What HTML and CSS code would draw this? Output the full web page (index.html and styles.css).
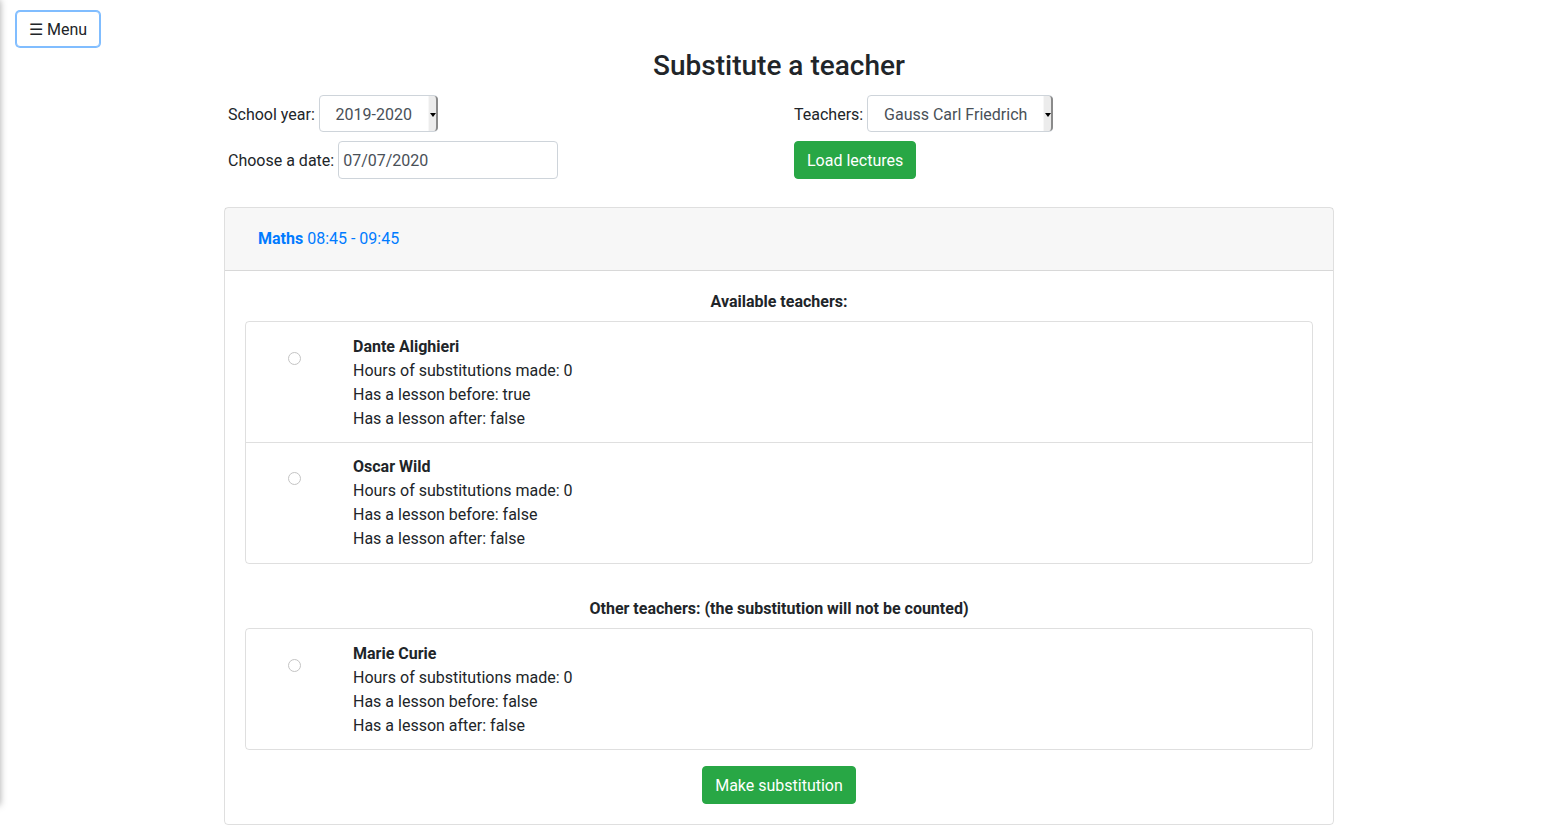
FILE: index.html
```html
<!DOCTYPE html>
<html lang="en">
<head>
<meta charset="utf-8">
<title>Substitute a teacher</title>
<link rel="stylesheet" href="styles.css">
</head>
<body>
<div class="sidebar-shadow"></div>
<button class="menu-btn">☰ Menu</button>
<main class="container">
  <h3 class="title">Substitute a teacher</h3>
  <div class="form-row">
    <div class="col">
      <div class="field">
        <label class="lbl">School year:</label>
        <div class="select sel-year"><span class="sel-text">2019-2020</span><span class="sel-arrow"></span></div>
      </div>
      <div class="field">
        <label class="lbl">Choose a date:</label>
        <div class="date-input">07/07/2020</div>
      </div>
    </div>
    <div class="col">
      <div class="field">
        <label class="lbl lbl-right">Teachers:</label>
        <div class="select sel-teacher"><span class="sel-text">Gauss Carl Friedrich</span><span class="sel-arrow"></span></div>
      </div>
      <div class="field">
        <button class="btn-green">Load lectures</button>
      </div>
    </div>
  </div>

  <section class="card">
    <div class="card-header">
      <button class="btn-link"><b>Maths</b> 08:45 - 09:45</button>
    </div>
    <div class="card-body">
      <div class="list-title">Available teachers:</div>
      <ul class="list">
        <li class="item">
          <div class="radio-col"><span class="radio"></span></div>
          <div class="info">
            <div class="name">Dante Alighieri</div>
            <div>Hours of substitutions made: 0</div>
            <div>Has a lesson before: true</div>
            <div>Has a lesson after: false</div>
          </div>
        </li>
        <li class="item">
          <div class="radio-col"><span class="radio"></span></div>
          <div class="info">
            <div class="name">Oscar Wild</div>
            <div>Hours of substitutions made: 0</div>
            <div>Has a lesson before: false</div>
            <div>Has a lesson after: false</div>
          </div>
        </li>
      </ul>
      <div class="list-title other">Other teachers: (the substitution will not be counted)</div>
      <ul class="list">
        <li class="item">
          <div class="radio-col"><span class="radio"></span></div>
          <div class="info">
            <div class="name">Marie Curie</div>
            <div>Hours of substitutions made: 0</div>
            <div>Has a lesson before: false</div>
            <div>Has a lesson after: false</div>
          </div>
        </li>
      </ul>
      <div class="actions">
        <button class="btn-green">Make substitution</button>
      </div>
    </div>
  </section>
</main>
</body>
</html>
```
FILE: styles.css
```css
* { box-sizing: border-box; }
html, body { margin: 0; padding: 0; }
body {
  font-family: Roboto, "Liberation Sans", sans-serif;
  font-size: 16px;
  line-height: 24px;
  color: #212529;
  background: #fff;
  overflow: hidden;
}
.sidebar-shadow {
  position: fixed;
  left: -300px;
  top: 0;
  width: 300px;
  height: 805px;
  box-shadow: 0 0 7px rgba(0,0,0,0.35);
}
.menu-btn {
  position: absolute;
  left: 16px;
  top: 11px;
  height: 36px;
  width: 84px;
  padding: 0 11px;
  font-family: inherit;
  font-size: 16px;
  color: #212529;
  background: #fff;
  border: 1px solid #80bdff;
  border-radius: 4px;
  box-shadow: 0 0 0 1px #80bdff;
}
.container {
  width: 1110px;
  margin: 0 auto;
  padding-top: 49px;
}
.title {
  margin: 0 0 12px;
  font-size: 28px;
  line-height: 34px;
  font-weight: 500;
  text-align: center;
}
.form-row {
  display: flex;
}
.col {
  flex: none;
  width: 570px;
  display: flex;
  flex-direction: column;
  gap: 9px;
}
.field {
  display: flex;
  align-items: center;
  gap: 4px;
}
.lbl { margin-left: 4px; position: relative; top: 1px; }
.lbl-right { margin-left: 0; }
.select {
  position: relative;
  height: 37px;
  border: 1px solid #ced4da;
  border-radius: 4px;
  display: flex;
  align-items: center;
  color: #495057;
  background: #fff;
}
.sel-year { width: 119px; }
.sel-teacher { width: 186px; }
.sel-text {
  flex: 1;
  text-align: center;
  position: relative;
  top: 1px;
}
.sel-arrow {
  align-self: stretch;
  width: 10px;
  margin: 0 -1px 0 0;
  background: #ececec;
  border-left: 1px solid #f7f7f7;
  border-right: 2px solid #8a8a8a;
  border-radius: 0 4px 4px 0;
  position: relative;
}
.sel-arrow::after {
  content: "";
  position: absolute;
  left: 1px;
  top: 17px;
  border-left: 3px solid transparent;
  border-right: 3px solid transparent;
  border-top: 4px solid #000;
}
.date-input {
  width: 220px;
  height: 38px;
  border: 1px solid #ced4da;
  border-radius: 4px;
  padding: 7px 4px 5px;
  color: #495057;
}
.btn-green {
  height: 38px;
  padding: 0 12px;
  font-family: inherit;
  font-size: 16px;
  color: #fff;
  background: #28a745;
  border: 1px solid #28a745;
  border-radius: 4px;
}
.card {
  margin-top: 28px;
  border: 1px solid rgba(0,0,0,0.125);
  border-radius: 4px;
}
.card-header {
  padding: 11px 20px 13px;
  background: rgba(0,0,0,0.03);
  border-bottom: 1px solid rgba(0,0,0,0.125);
}
.btn-link {
  height: 38px;
  padding: 0 12px;
  font-family: inherit;
  font-size: 16px;
  color: #007bff;
  background: transparent;
  border: 1px solid transparent;
}
.btn-link b { font-weight: 700; }
.card-body {
  padding: 20px;
}
.list-title {
  font-weight: 700;
  text-align: center;
  line-height: 20px;
  padding-top: 1px;
  margin-bottom: 9px;
}
.list-title.other { margin-top: 34px; }
.list {
  list-style: none;
  margin: 0;
  padding: 0;
  border: 1px solid rgba(0,0,0,0.125);
  border-radius: 4px;
}
.item {
  display: flex;
  padding: 12px 20px;
}
.item:first-child { padding: 13px 20px 11px; }
.item + .item { border-top: 1px solid rgba(0,0,0,0.125); }
.radio-col {
  width: 87px;
  flex: none;
}
.radio {
  display: block;
  width: 13px;
  height: 13px;
  margin: 17px 0 0 22px;
  border: 1px solid #c4c4c4;
  border-radius: 50%;
  background: #fff;
}
.name { font-weight: 700; }
.actions {
  display: flex;
  justify-content: center;
  margin-top: 16px;
}
```
